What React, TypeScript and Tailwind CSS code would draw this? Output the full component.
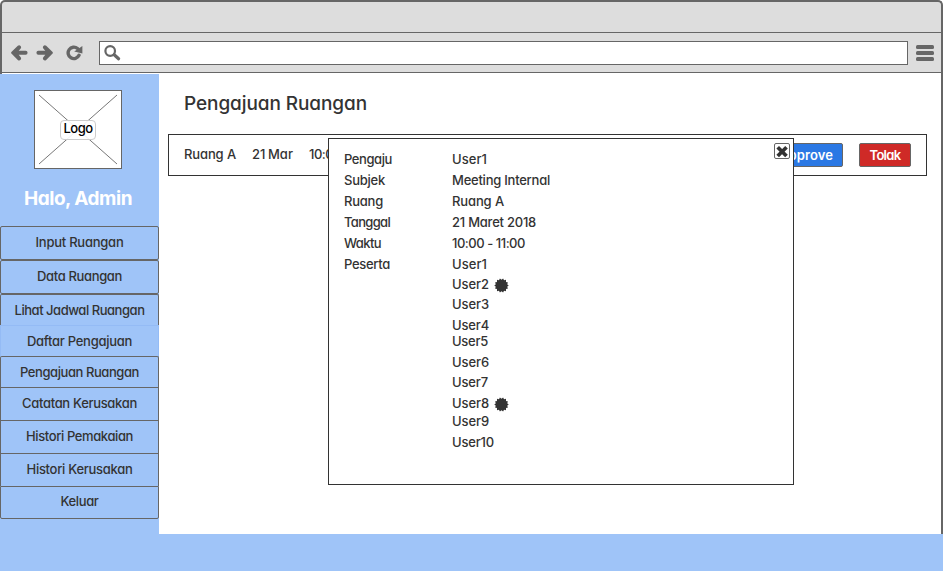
import { useLayoutEffect, useRef } from "react";

type FitProps = { text: string; width: number; className?: string };

// Tracks a label out (or in) so that it takes exactly `width` pixels.
function Fit({ text, width, className = "" }: FitProps) {
  const ref = useRef<HTMLSpanElement>(null);
  useLayoutEffect(() => {
    const el = ref.current;
    if (!el) return;
    el.style.letterSpacing = "0px";
    const natural = el.getBoundingClientRect().width;
    el.style.letterSpacing = `${(width - natural) / text.length}px`;
  }, [text, width]);
  return (
    <span ref={ref} className={`inline-block shrink-0 whitespace-nowrap ${className}`}>
      {text}
    </span>
  );
}

function ArrowIcon({ flip = false }: { flip?: boolean }) {
  return (
    <svg width="17" height="16" viewBox="0 0 17 16" className={flip ? "-scale-x-100" : ""}>
      <path
        d="M.4 7 6.800.7q1.500-1.100 2.800.2 1.100 1.400-.1 2.800L7.700 5.700h7q1.800.2 1.900 2.100-.1 1.800-1.900 2h-7l1.800 2.100q1.200 1.400.1 2.800-1.300 1.300-2.800.2L.4 8.600q-.6-.8 0-1.600z"
        fill="#666"
      />
    </svg>
  );
}

function ReloadIcon() {
  return (
    <svg width="17" height="16" viewBox="0 0 17 16">
      <path d="M13 10.300A5.700 5.700 0 1 1 11.500 3.500" fill="none" stroke="#666" strokeWidth="3.400" strokeLinecap="round" />
      <path d="M16.400.9v7.600L8.200 6.600z" fill="#666" />
    </svg>
  );
}

function SearchIcon() {
  return (
    <svg width="17" height="16" viewBox="0 0 17 16">
      <circle cx="6.200" cy="6" r="4.800" fill="none" stroke="#666" strokeWidth="2.200" />
      <path d="m10.200 9.800 4.400 3.900" stroke="#666" strokeWidth="3.200" strokeLinecap="round" />
    </svg>
  );
}

function BadgeIcon() {
  const points = Array.from({ length: 28 }, (_, i) => {
    const r = i % 2 === 0 ? 7.2 : 5.8;
    const a = ((i + 1) * Math.PI) / 14;
    return `${(7.5 + r * Math.sin(a)).toFixed(2)},${(7.5 - r * Math.cos(a)).toFixed(2)}`;
  }).join(" ");
  return (
    <svg width="15" height="15" viewBox="0 0 15 15" className="shrink-0">
      <polygon points={points} fill="#333" />
    </svg>
  );
}

const menu = [
  { text: "Input Ruangan", width: 88, box: "h-[34px] rounded-xs border border-[#666] pb-0.5" },
  { text: "Data Ruangan", width: 85, box: "h-[34px] rounded-xs border border-[#666] pb-0.5" },
  { text: "Lihat Jadwal Ruangan", width: 130, box: "h-[31px] rounded-t-xs border border-b-0 border-[#666]" },
  { text: "Daftar Pengajuan", width: 105, box: "h-[31px] border border-b-0 border-[#94bbf5]" },
  { text: "Pengajuan Ruangan", width: 119, box: "h-[31px] rounded-t-xs border border-b-0 border-[#666]" },
  { text: "Catatan Kerusakan", width: 115, box: "h-[33px] border border-b-0 border-[#666] pb-0.5" },
  { text: "Histori Pemakaian", width: 107, box: "h-[33px] border border-b-0 border-[#666] pb-0.5" },
  { text: "Histori Kerusakan", width: 106, box: "h-[33px] border border-b-0 border-[#666] pb-0.5" },
  { text: "Keluar", width: 38, box: "h-[33px] rounded-b-xs border border-[#666] pb-[3px]" },
];

const details = [
  { label: "Pengaju", lw: 48, value: "User1", vw: 35 },
  { label: "Subjek", lw: 41, value: "Meeting Internal", vw: 98 },
  { label: "Ruang", lw: 39, value: "Ruang A", vw: 52 },
  { label: "Tanggal", lw: 46, value: "21 Maret 2018", vw: 84 },
  { label: "Waktu", lw: 37, value: "10:00 - 11:00", vw: 73 },
];

const people = [
  { name: "User1", width: 35, row: "h-5" },
  { name: "User2", width: 37, row: "h-5", badge: true },
  { name: "User3", width: 37, row: "h-[21px]" },
  { name: "User4", width: 37, row: "h-4" },
  { name: "User5", width: 36, row: "h-[21px]" },
  { name: "User6", width: 37, row: "h-5" },
  { name: "User7", width: 36, row: "h-[21px]" },
  { name: "User8", width: 37, row: "h-[18px]", badge: true },
  { name: "User9", width: 37, row: "h-[21px]" },
  { name: "User10", width: 42, row: "h-[21px]" },
];

function BrowserChrome() {
  return (
    <header className="flex h-[74px] flex-col rounded-t-[5px] border-2 border-b-0 border-[#666] bg-[#ddd]">
      <div className="h-[31px] border-b border-[#666]" />
      <div className="flex h-10 items-center border-b border-[#666] pl-[9px] pr-[7px]">
        <div className="flex gap-2">
          <ArrowIcon />
          <ArrowIcon flip />
        </div>
        <div className="ml-[13px] flex">
          <ReloadIcon />
        </div>
        <div className="ml-4 flex h-6 flex-1 items-center border border-[#666] bg-white pl-1">
          <SearchIcon />
        </div>
        <div className="ml-2 flex w-[18px] flex-col gap-[2px]">
          <div className="h-1 rounded-[1.5px] bg-[#666]" />
          <div className="h-1 rounded-[1.5px] bg-[#666]" />
          <div className="h-1 rounded-[1.5px] bg-[#666]" />
        </div>
      </div>
      <div className="h-px bg-white" />
    </header>
  );
}

function Sidebar() {
  return (
    <aside className="flex w-[159px] shrink-0 flex-col bg-[#9fc4f8] pt-4">
      <div className="relative ml-[34px] flex h-[79px] w-[88px] items-center justify-center border border-[#666] bg-white">
        <svg width="86" height="77" className="absolute left-0 top-0">
          <path d="M4 4 82 73M82 4 4 73" stroke="#777" strokeWidth="1" />
        </svg>
        <div className="relative flex h-5 w-9 items-center justify-center rounded-[4px] border border-[#ccc] bg-white/90 pb-[3px] text-black">
          <Fit text="Logo" width={29} />
        </div>
      </div>
      <div className="flex h-[57px] items-center pl-6 pt-0.5 text-[19px] font-bold text-white">
        <Fit text="Halo, Admin" width={108} />
      </div>
      <nav>
        {menu.map((m) => (
          <div key={m.text} className={`flex items-center justify-center ${m.box}`}>
            <Fit text={m.text} width={m.width} />
          </div>
        ))}
      </nav>
    </aside>
  );
}

function DetailDialog() {
  return (
    <section className="absolute left-[169px] top-16 h-[347px] w-[466px] border border-[#333] bg-white pl-[15px] pt-2.5 leading-[21px]">
      {details.map((d) => (
        <div key={d.label} className="flex h-[21px]">
          <div className="w-[108px]">
            <Fit text={d.label} width={d.lw} />
          </div>
          <Fit text={d.value} width={d.vw} />
        </div>
      ))}
      <div className="flex">
        <div className="w-[108px]">
          <Fit text="Peserta" width={46} />
        </div>
        <div>
          {people.map((p) => (
            <div key={p.name} className={`flex items-start ${p.row}`}>
              <Fit text={p.name} width={p.width} />
              {p.badge && (
                <div className="ml-[5px] flex h-[21px] items-center pt-px">
                  <BadgeIcon />
                </div>
              )}
            </div>
          ))}
        </div>
      </div>
      <button className="absolute right-[3px] top-1 flex size-4 items-center justify-center rounded-xs border border-[#666] bg-white">
        <svg width="14" height="14" viewBox="0 0 14 14" className="shrink-0">
          <path d="m4 4.500 6.200 6.200M10.200 4.500 4 10.700" stroke="#333" strokeWidth="3.700" strokeLinecap="square" />
        </svg>
      </button>
    </section>
  );
}

export default function App() {
  return (
    <div className="flex h-[571px] w-[943px] flex-col overflow-hidden bg-white font-['Inter','Noto_Sans',sans-serif] text-[13px] font-medium leading-none text-[#333] [font-feature-settings:'cv11','calt'_0]">
      <BrowserChrome />
      <div className="flex h-[460px]">
        <Sidebar />
        <main className="relative flex-1 border-r-2 border-[#666] bg-white pl-[9px]">
          <h1 className="flex h-[60px] items-center pb-0.5 pl-4 text-[19px] font-medium">
            <Fit text="Pengajuan Ruangan" width={183} />
          </h1>
          <div className="flex h-[42px] w-[759px] items-center border border-[#333] pl-[15px] pr-[15px]">
            <div className="flex gap-4 pb-0.5">
              <Fit text="Ruang A" width={52} />
              <Fit text="21 Mar" width={41} className="[word-spacing:-1px]" />
              <Fit text="10:00 - 11:00" width={73} />
            </div>
            <div className="ml-auto flex gap-4 font-semibold text-white">
              <button className="flex h-6 w-[74px] items-center justify-center rounded-xs border border-[#666] bg-[#2b78e4]">
                <Fit text="Approve" width={54} />
              </button>
              <button className="flex h-6 w-[52px] items-center justify-center rounded-xs border border-[#666] bg-[#cf2a27]">
                <Fit text="Tolak" width={31} />
              </button>
            </div>
          </div>
          <DetailDialog />
        </main>
      </div>
      <footer className="h-[37px] bg-[#9fc4f8]" />
    </div>
  );
}
